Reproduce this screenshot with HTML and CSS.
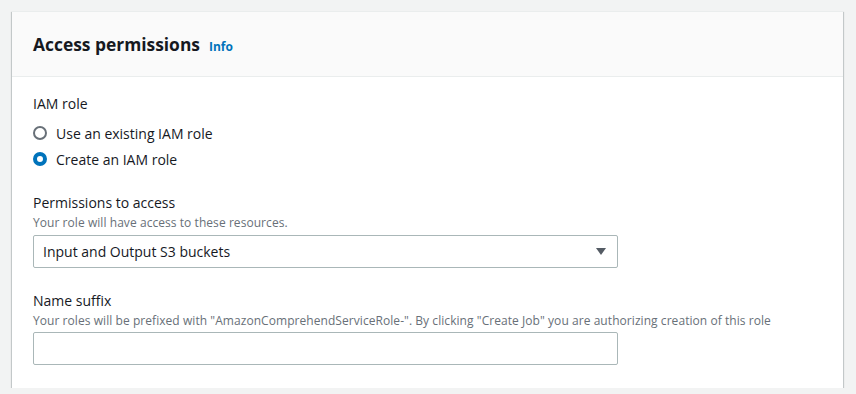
FILE: index.html
```html
<!DOCTYPE html>
<html lang="en">
<head>
    <meta charset="UTF-8">
    <title>Access permissions</title>
    <link rel="stylesheet" href="styles.css">
</head>
<body>

<div class="card">
    <div class="card-header">
        <h2>Access permissions</h2>
        <a href="#" class="info">Info</a>
    </div>
    <div class="card-body">
        <div class="field">
            <div class="label">IAM role</div>
            <div class="radio-group">
                <label class="radio">
                    <span class="dot"></span>
                    Use an existing IAM role
                </label>
                <label class="radio checked">
                    <span class="dot"></span>
                    Create an IAM role
                </label>
            </div>
        </div>

        <div class="field">
            <div class="label">Permissions to access</div>
            <div class="desc">Your role will have access to these resources.</div>
            <div class="select">
                <span>Input and Output S3 buckets</span>
                <span class="caret"></span>
            </div>
        </div>

        <div class="field">
            <div class="label">Name suffix</div>
            <div class="desc">Your roles will be prefixed with "AmazonComprehendServiceRole-". By clicking "Create Job" you are authorizing creation of this role</div>
            <input class="text-input" type="text">
        </div>
    </div>
</div>

</body>
</html>
```

FILE: styles.css
```css
/* Base */
body {
    margin: 0;
    padding: 11px 13px 0 12px;
    background-color: #f2f3f3;
    font-family: 'Open Sans', sans-serif;
    color: #16191f;
}
.card {
    background: #ffffff;
    box-shadow: 0 1px 1px 0 rgba(0, 28, 36, 0.3), 1px 1px 1px 0 rgba(0, 28, 36, 0.15), -1px 1px 1px 0 rgba(0, 28, 36, 0.15);
    border-top: 1px solid #eaeded;
}
.card-header {
    display: flex;
    align-items: baseline;
    gap: 9px;
    background-color: #fafafa;
    border-bottom: 1px solid #eaeded;
    padding: 21px 21px 21px 21px;
}
.card-header h2 {
    margin: 0;
    font-size: 17.4px;
    line-height: 22px;
    font-weight: 700;
}
.info {
    font-size: 12px;
    font-weight: 700;
    color: #0073bb;
    text-decoration: none;
}
.card-body {
    padding: 17px 21px 23px 21px;
}
.field + .field {
    margin-top: 21px;
}
.field:last-child {
    margin-top: 23px;
}
.label {
    font-size: 14px;
    line-height: 20px;
}
.desc {
    margin-top: 2px;
    font-size: 12px;
    line-height: 16px;
    letter-spacing: 0.06px;
    color: #687078;
}
.radio-group {
    margin-top: 6px;
}
.radio {
    display: flex;
    align-items: center;
    gap: 9px;
    height: 26px;
    font-size: 14px;
}
.dot {
    width: 14px;
    height: 14px;
    box-sizing: border-box;
    border: 2px solid #687078;
    border-radius: 50%;
    background: #ffffff;
}
.radio.checked .dot {
    border: 4px solid #0073bb;
}
.select {
    margin-top: 4px;
    width: 585px;
    height: 33px;
    box-sizing: border-box;
    border: 1px solid #aab7b8;
    border-radius: 2px;
    display: flex;
    align-items: center;
    justify-content: space-between;
    padding: 0 11px 0 9px;
    font-size: 14px;
}
.caret {
    width: 0;
    height: 0;
    border-left: 5px solid transparent;
    border-right: 5px solid transparent;
    border-top: 7px solid #545b64;
}
.text-input {
    display: block;
    margin: 3px 0 0 0;
    width: 585px;
    height: 33px;
    box-sizing: border-box;
    border: 1px solid #aab7b8;
    border-radius: 2px;
    background: #ffffff;
    font-family: inherit;
    font-size: 14px;
}
```
